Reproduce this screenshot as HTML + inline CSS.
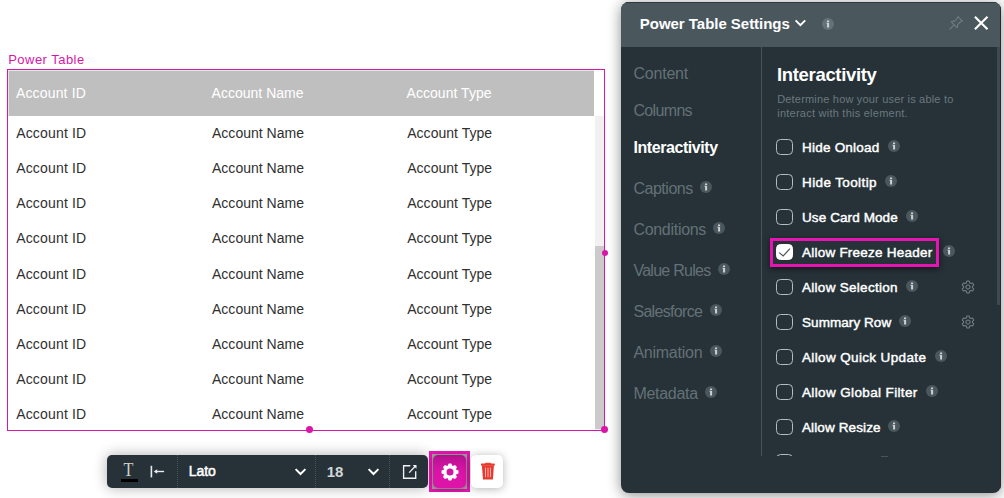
<!DOCTYPE html>
<html><head><meta charset="utf-8"><title>Power Table Settings</title>
<style>
html,body{margin:0;padding:0;}
body{width:1004px;height:498px;background:#fff;position:relative;overflow:hidden;font-family:"Liberation Sans", sans-serif;}
.a{position:absolute;display:block;}
.t{position:absolute;white-space:nowrap;line-height:20px;height:20px;}
.cb{width:17.2px;height:16.4px;box-sizing:border-box;border:1.4px solid #b7bbbd;border-radius:4.5px;}
.cb.on{background:#fff;border-color:#fff;}
</style></head><body>

<div class="t" style="left:8.20px;top:50px;line-height:19px;height:19px;font-size:13px;color:#d916a8;font-weight:400;letter-spacing:0.470px;">Power Table</div>
<div class="a" style="left:7px;top:69px;width:596px;height:360px;border:1px solid #d916a8;"></div>
<div class="a" style="left:8px;top:70px;width:586px;height:46px;background:#dfe9e4;"></div>
<div class="a" style="left:9px;top:71px;width:585px;height:45px;background:#bfbfbf;"></div>
<div class="a" style="left:595px;top:116px;width:9px;height:314px;background:#f1f1f1;"></div>
<div class="a" style="left:595px;top:246px;width:9px;height:183px;background:#cbcbcb;"></div>
<div class="t" style="left:15.90px;top:83px;line-height:20px;height:20px;font-size:14px;color:#fff;font-weight:400;letter-spacing:0.170px;">Account ID</div>
<div class="t" style="left:211.60px;top:83px;line-height:20px;height:20px;font-size:14px;color:#fff;font-weight:400;letter-spacing:0.014px;">Account Name</div>
<div class="t" style="left:406.60px;top:83px;line-height:20px;height:20px;font-size:14px;color:#fff;font-weight:400;letter-spacing:0.035px;">Account Type</div>
<div class="t" style="left:16.20px;top:123px;line-height:20px;height:20px;font-size:14px;color:#303030;font-weight:400;letter-spacing:0.170px;">Account ID</div>
<div class="t" style="left:212.00px;top:123px;line-height:20px;height:20px;font-size:14px;color:#303030;font-weight:400;letter-spacing:0.014px;">Account Name</div>
<div class="t" style="left:407.20px;top:123px;line-height:20px;height:20px;font-size:14px;color:#303030;font-weight:400;letter-spacing:0.035px;">Account Type</div>
<div class="t" style="left:16.20px;top:158px;line-height:20px;height:20px;font-size:14px;color:#303030;font-weight:400;letter-spacing:0.170px;">Account ID</div>
<div class="t" style="left:212.00px;top:158px;line-height:20px;height:20px;font-size:14px;color:#303030;font-weight:400;letter-spacing:0.014px;">Account Name</div>
<div class="t" style="left:407.20px;top:158px;line-height:20px;height:20px;font-size:14px;color:#303030;font-weight:400;letter-spacing:0.035px;">Account Type</div>
<div class="t" style="left:16.20px;top:193px;line-height:20px;height:20px;font-size:14px;color:#303030;font-weight:400;letter-spacing:0.170px;">Account ID</div>
<div class="t" style="left:212.00px;top:193px;line-height:20px;height:20px;font-size:14px;color:#303030;font-weight:400;letter-spacing:0.014px;">Account Name</div>
<div class="t" style="left:407.20px;top:193px;line-height:20px;height:20px;font-size:14px;color:#303030;font-weight:400;letter-spacing:0.035px;">Account Type</div>
<div class="t" style="left:16.20px;top:228px;line-height:20px;height:20px;font-size:14px;color:#303030;font-weight:400;letter-spacing:0.170px;">Account ID</div>
<div class="t" style="left:212.00px;top:228px;line-height:20px;height:20px;font-size:14px;color:#303030;font-weight:400;letter-spacing:0.014px;">Account Name</div>
<div class="t" style="left:407.20px;top:228px;line-height:20px;height:20px;font-size:14px;color:#303030;font-weight:400;letter-spacing:0.035px;">Account Type</div>
<div class="t" style="left:16.20px;top:264px;line-height:20px;height:20px;font-size:14px;color:#303030;font-weight:400;letter-spacing:0.170px;">Account ID</div>
<div class="t" style="left:212.00px;top:264px;line-height:20px;height:20px;font-size:14px;color:#303030;font-weight:400;letter-spacing:0.014px;">Account Name</div>
<div class="t" style="left:407.20px;top:264px;line-height:20px;height:20px;font-size:14px;color:#303030;font-weight:400;letter-spacing:0.035px;">Account Type</div>
<div class="t" style="left:16.20px;top:299px;line-height:20px;height:20px;font-size:14px;color:#303030;font-weight:400;letter-spacing:0.170px;">Account ID</div>
<div class="t" style="left:212.00px;top:299px;line-height:20px;height:20px;font-size:14px;color:#303030;font-weight:400;letter-spacing:0.014px;">Account Name</div>
<div class="t" style="left:407.20px;top:299px;line-height:20px;height:20px;font-size:14px;color:#303030;font-weight:400;letter-spacing:0.035px;">Account Type</div>
<div class="t" style="left:16.20px;top:334px;line-height:20px;height:20px;font-size:14px;color:#303030;font-weight:400;letter-spacing:0.170px;">Account ID</div>
<div class="t" style="left:212.00px;top:334px;line-height:20px;height:20px;font-size:14px;color:#303030;font-weight:400;letter-spacing:0.014px;">Account Name</div>
<div class="t" style="left:407.20px;top:334px;line-height:20px;height:20px;font-size:14px;color:#303030;font-weight:400;letter-spacing:0.035px;">Account Type</div>
<div class="t" style="left:16.20px;top:369px;line-height:20px;height:20px;font-size:14px;color:#303030;font-weight:400;letter-spacing:0.170px;">Account ID</div>
<div class="t" style="left:212.00px;top:369px;line-height:20px;height:20px;font-size:14px;color:#303030;font-weight:400;letter-spacing:0.014px;">Account Name</div>
<div class="t" style="left:407.20px;top:369px;line-height:20px;height:20px;font-size:14px;color:#303030;font-weight:400;letter-spacing:0.035px;">Account Type</div>
<div class="t" style="left:16.20px;top:404px;line-height:20px;height:20px;font-size:14px;color:#303030;font-weight:400;letter-spacing:0.170px;">Account ID</div>
<div class="t" style="left:212.00px;top:404px;line-height:20px;height:20px;font-size:14px;color:#303030;font-weight:400;letter-spacing:0.014px;">Account Name</div>
<div class="t" style="left:407.20px;top:404px;line-height:20px;height:20px;font-size:14px;color:#303030;font-weight:400;letter-spacing:0.035px;">Account Type</div>
<div class="a" style="left:601.80px;top:249.80px;width:6.0px;height:6.0px;border-radius:50%;background:#d916a8;"></div>
<div class="a" style="left:600.90px;top:426.10px;width:6.8px;height:6.8px;border-radius:50%;background:#d916a8;"></div>
<div class="a" style="left:305.90px;top:426.00px;width:7.0px;height:7.0px;border-radius:50%;background:#d916a8;"></div>
<div class="a" style="left:107px;top:455px;width:321px;height:33px;background:#263238;border-radius:5px;box-shadow:0 0 14px rgba(0,0,0,.32);"></div>
<div class="a" style="left:177px;top:455px;width:0;height:33px;border-left:1px dotted #46535a;"></div>
<div class="a" style="left:315px;top:455px;width:0;height:33px;border-left:1px dotted #46535a;"></div>
<div class="a" style="left:389px;top:455px;width:0;height:33px;border-left:1px dotted #46535a;"></div>
<div class="t" style="left:122.85px;top:459.5px;font-family:'Liberation Serif',serif;font-size:18.2px;color:#cdd0d2;line-height:20px;transform:scaleX(.89);transform-origin:50% 50%;">T</div>
<div class="a" style="left:121px;top:479.1px;width:16.8px;height:2.6px;background:#000;"></div>
<svg class="a" style="left:148px;top:463px" width="20" height="17" viewBox="0 0 20 17">
<rect x="2.6" y="2.8" width="1.6" height="11.6" fill="#e8eaeb"/>
<path d="M16.1 8.5H7" stroke="#e8eaeb" stroke-width="1.4" fill="none"/>
<path d="M9.2 6.2 L5.7 8.5 L9.2 10.8Z" fill="#e8eaeb"/></svg>
<div class="t" style="left:188.80px;top:461px;line-height:20px;height:20px;font-size:14px;color:#fff;font-weight:400;letter-spacing:-0.060px;-webkit-text-stroke:0.5px #fff;">Lato</div>
<svg class="a" style="left:293px;top:466px" width="15" height="11" viewBox="0 0 15 11"><path d="M2.6 3.1 L7.5 8 L12.4 3.1" fill="none" stroke="#fff" stroke-width="2"/></svg>
<div class="t" style="left:326.80px;top:461px;line-height:21px;height:21px;font-size:15px;color:#d3d6d8;font-weight:700;letter-spacing:-0.200px;">18</div>
<svg class="a" style="left:365.6px;top:466px" width="15" height="11" viewBox="0 0 15 11"><path d="M2.6 3.1 L7.5 8 L12.4 3.1" fill="none" stroke="#fff" stroke-width="2"/></svg>
<svg class="a" style="left:401px;top:463px" width="18" height="18" viewBox="0 0 18 18">
<path d="M9.3 2.7H2.6V15.2H14.7V8.3" fill="none" stroke="#f1f2f3" stroke-width="1.35"/>
<path d="M8.2 9.6 L14.2 3.3" stroke="#f1f2f3" stroke-width="1.35" fill="none"/>
<path d="M11.6 1.9H15.5V5.8Z" fill="#f1f2f3"/></svg>
<div class="a" style="left:429px;top:451px;width:35px;height:35px;border:3px solid #e614b0;background:#9ba3a0;"></div>
<div class="a" style="left:433px;top:455px;width:33px;height:33px;border-radius:5px;background:linear-gradient(#b1118a 0%,#c5129a 20%,#d514a4 42%,#dc14a8 62%,#dc14a8 100%);box-shadow:0 1px 6px rgba(0,0,0,.3);"></div>
<svg class="a" style="left:439.63px;top:461.83px" width="20" height="20" viewBox="-10 -10 20 20"><path d="M-1.63 -5.88 L-1.02 -7.83 L1.02 -7.83 L1.63 -5.88 L3.01 -5.31 L4.81 -6.26 L6.26 -4.81 L5.31 -3.01 L5.88 -1.63 L7.83 -1.02 L7.83 1.02 L5.88 1.63 L5.31 3.01 L6.26 4.81 L4.81 6.26 L3.01 5.31 L1.63 5.88 L1.02 7.83 L-1.02 7.83 L-1.63 5.88 L-3.01 5.31 L-4.81 6.26 L-6.26 4.81 L-5.31 3.01 L-5.88 1.63 L-7.83 1.02 L-7.83 -1.02 L-5.88 -1.63 L-5.31 -3.01 L-6.26 -4.81 L-4.81 -6.26 L-3.01 -5.31Z" fill="#fff" stroke="#fff" stroke-width="1.3" stroke-linejoin="round"/><circle cx="0" cy="0" r="3.5" fill="#d313a2"/></svg>
<div class="a" style="left:470.8px;top:455px;width:32.4px;height:33px;border-radius:5px;background:#fff;box-shadow:0 1px 8px rgba(0,0,0,.3);"></div>
<svg class="a" style="left:479px;top:461px" width="18" height="21" viewBox="0 0 18 21">
<path d="M6.2 1.8H11.9V2.9H6.2z" fill="#e53a30"/>
<rect x="2" y="2.6" width="13.8" height="2.1" rx="0.6" fill="#e53a30"/>
<path d="M2.9 4.4H14.9L13.9 18.6H4z" fill="#e53a30"/>
<path d="M6.5 6.6V16.2 M9 6.6V16.2 M11.45 6.6V16.2" stroke="#f7c1bc" stroke-width="0.9" fill="none"/></svg>
<div class="a" style="left:621px;top:2px;width:380px;height:490.5px;border-radius:8px;background:#263238;box-shadow:0 2px 14px rgba(0,0,0,.45);overflow:hidden;"><div class="a" style="left:0;top:0;width:380px;height:45px;background:#4a585e;border-top:1px solid #2c383e;box-sizing:border-box;"></div><div class="a" style="left:376px;top:45px;width:3px;height:258px;background:#3d4a51;"></div><div class="a" style="left:379px;top:0;width:1px;height:491px;background:#222c31;"></div><div class="a" style="left:140px;top:45px;width:1px;height:409px;background:#46535a;"></div></div>
<div class="t" style="left:639.80px;top:13px;line-height:21px;height:21px;font-size:15px;color:#fff;font-weight:700;letter-spacing:-0.030px;">Power Table Settings</div>
<svg class="a" style="left:793.2px;top:17px" width="15" height="12" viewBox="0 0 15 12"><path d="M2.6 3.3 L7.4 8.2 L12.2 3.3" fill="none" stroke="#fff" stroke-width="1.9"/></svg>
<svg class="a" style="left:822.00px;top:17.60px" width="12" height="12" viewBox="0 0 12 12"><circle cx="6" cy="6" r="6" fill="#637277"/><rect x="5" y="2.5" width="2.1" height="1.5" fill="#d2d6d8"/><path d="M4.3 4.8H7.1V9.6H5.1V5.6H4.3z" fill="#d2d6d8"/></svg>
<svg class="a" style="left:946px;top:12px" width="22" height="22" viewBox="0 0 22 22">
<g fill="none" stroke="#6f7c81" stroke-width="1.1" stroke-linejoin="round" stroke-linecap="round">
<path d="M11.9 4.6 L16.6 9.1"/>
<path d="M12.5 5.2 L8.3 9.3 Q6.5 8.7 5.3 9.9 L10.9 15.7 Q12.1 14.4 11.5 12.7 L15.9 8.5"/>
<path d="M8.1 12.9 L3.9 17.2"/></g></svg>
<svg class="a" style="left:973px;top:15px" width="17" height="17" viewBox="0 0 17 17"><path d="M1.9 1.7 L14.5 14.3 M14.5 1.7 L1.9 14.3" stroke="#fff" stroke-width="2.1" fill="none"/></svg>
<div class="t" style="left:633.40px;top:63px;line-height:21px;height:21px;font-size:16px;color:#647176;font-weight:400;letter-spacing:-0.200px;">Content</div>
<div class="t" style="left:633.40px;top:100px;line-height:21px;height:21px;font-size:16px;color:#647176;font-weight:400;letter-spacing:-0.650px;">Columns</div>
<div class="t" style="left:633.40px;top:137px;line-height:21px;height:21px;font-size:16px;color:#fff;font-weight:700;letter-spacing:-0.424px;">Interactivity</div>
<div class="t" style="left:633.40px;top:178px;line-height:21px;height:21px;font-size:16px;color:#647176;font-weight:400;letter-spacing:-0.468px;">Captions</div>
<svg class="a" style="left:700.00px;top:181.20px" width="12" height="12" viewBox="0 0 12 12"><circle cx="6" cy="6" r="6" fill="#4a575d"/><rect x="5" y="2.5" width="2.1" height="1.5" fill="#cdd1d3"/><path d="M4.3 4.8H7.1V9.6H5.1V5.6H4.3z" fill="#cdd1d3"/></svg>
<div class="t" style="left:633.40px;top:219px;line-height:21px;height:21px;font-size:16px;color:#647176;font-weight:400;letter-spacing:-0.293px;">Conditions</div>
<svg class="a" style="left:713.20px;top:222.20px" width="12" height="12" viewBox="0 0 12 12"><circle cx="6" cy="6" r="6" fill="#4a575d"/><rect x="5" y="2.5" width="2.1" height="1.5" fill="#cdd1d3"/><path d="M4.3 4.8H7.1V9.6H5.1V5.6H4.3z" fill="#cdd1d3"/></svg>
<div class="t" style="left:633.40px;top:260px;line-height:21px;height:21px;font-size:16px;color:#647176;font-weight:400;letter-spacing:-0.729px;">Value Rules</div>
<svg class="a" style="left:718.00px;top:263.20px" width="12" height="12" viewBox="0 0 12 12"><circle cx="6" cy="6" r="6" fill="#4a575d"/><rect x="5" y="2.5" width="2.1" height="1.5" fill="#cdd1d3"/><path d="M4.3 4.8H7.1V9.6H5.1V5.6H4.3z" fill="#cdd1d3"/></svg>
<div class="t" style="left:633.40px;top:301px;line-height:21px;height:21px;font-size:16px;color:#647176;font-weight:400;letter-spacing:-0.673px;">Salesforce</div>
<svg class="a" style="left:710.10px;top:304.20px" width="12" height="12" viewBox="0 0 12 12"><circle cx="6" cy="6" r="6" fill="#4a575d"/><rect x="5" y="2.5" width="2.1" height="1.5" fill="#cdd1d3"/><path d="M4.3 4.8H7.1V9.6H5.1V5.6H4.3z" fill="#cdd1d3"/></svg>
<div class="t" style="left:633.40px;top:342px;line-height:21px;height:21px;font-size:16px;color:#647176;font-weight:400;letter-spacing:-0.250px;">Animation</div>
<svg class="a" style="left:710.10px;top:345.20px" width="12" height="12" viewBox="0 0 12 12"><circle cx="6" cy="6" r="6" fill="#4a575d"/><rect x="5" y="2.5" width="2.1" height="1.5" fill="#cdd1d3"/><path d="M4.3 4.8H7.1V9.6H5.1V5.6H4.3z" fill="#cdd1d3"/></svg>
<div class="t" style="left:633.40px;top:383px;line-height:21px;height:21px;font-size:16px;color:#647176;font-weight:400;letter-spacing:-0.296px;">Metadata</div>
<svg class="a" style="left:705.10px;top:386.20px" width="12" height="12" viewBox="0 0 12 12"><circle cx="6" cy="6" r="6" fill="#4a575d"/><rect x="5" y="2.5" width="2.1" height="1.5" fill="#cdd1d3"/><path d="M4.3 4.8H7.1V9.6H5.1V5.6H4.3z" fill="#cdd1d3"/></svg>
<div class="t" style="left:777.00px;top:62px;line-height:25px;height:25px;font-size:18.5px;color:#fff;font-weight:700;letter-spacing:-0.330px;">Interactivity</div>
<div class="t" style="left:777.20px;top:91px;line-height:16px;height:16px;font-size:11px;color:#6b787e;font-weight:400;letter-spacing:0.185px;">Determine how your user is able to</div>
<div class="t" style="left:777.20px;top:105px;line-height:16px;height:16px;font-size:11px;color:#6b787e;font-weight:400;letter-spacing:0.244px;">interact with this element.</div>
<div class="a cb" style="left:776px;top:138.70px"></div>
<div class="t" style="left:802.00px;top:138px;line-height:19px;height:19px;font-size:13.5px;color:#fff;font-weight:400;letter-spacing:0.225px;-webkit-text-stroke:0.45px #fff;">Hide Onload</div>
<svg class="a" style="left:888.10px;top:139.70px" width="12" height="12" viewBox="0 0 12 12"><circle cx="6" cy="6" r="6" fill="#4a575d"/><rect x="5" y="2.5" width="2.1" height="1.5" fill="#cdd1d3"/><path d="M4.3 4.8H7.1V9.6H5.1V5.6H4.3z" fill="#cdd1d3"/></svg>
<div class="a cb" style="left:776px;top:173.70px"></div>
<div class="t" style="left:802.00px;top:173px;line-height:19px;height:19px;font-size:13.5px;color:#fff;font-weight:400;letter-spacing:0.384px;-webkit-text-stroke:0.45px #fff;">Hide Tooltip</div>
<svg class="a" style="left:885.40px;top:174.70px" width="12" height="12" viewBox="0 0 12 12"><circle cx="6" cy="6" r="6" fill="#4a575d"/><rect x="5" y="2.5" width="2.1" height="1.5" fill="#cdd1d3"/><path d="M4.3 4.8H7.1V9.6H5.1V5.6H4.3z" fill="#cdd1d3"/></svg>
<div class="a cb" style="left:776px;top:208.70px"></div>
<div class="t" style="left:802.00px;top:208px;line-height:19px;height:19px;font-size:13.5px;color:#fff;font-weight:400;letter-spacing:0.100px;-webkit-text-stroke:0.45px #fff;">Use Card Mode</div>
<svg class="a" style="left:906.20px;top:209.70px" width="12" height="12" viewBox="0 0 12 12"><circle cx="6" cy="6" r="6" fill="#4a575d"/><rect x="5" y="2.5" width="2.1" height="1.5" fill="#cdd1d3"/><path d="M4.3 4.8H7.1V9.6H5.1V5.6H4.3z" fill="#cdd1d3"/></svg>
<div class="a" style="left:770px;top:238px;width:163px;height:23px;border:3px solid #e614b0;box-shadow:0 2px 6px rgba(0,0,0,.55);"></div>
<div class="a cb on" style="left:776px;top:243.70px"></div><svg class="a" style="left:776px;top:243.70px" width="17" height="17" viewBox="0 0 17 17"><path d="M3.2 8.6 L7.2 12 L13.9 4.6" fill="none" stroke="#4f585e" stroke-width="1.2"/></svg>
<div class="t" style="left:802.00px;top:243px;line-height:19px;height:19px;font-size:13.5px;color:#fff;font-weight:400;letter-spacing:0.230px;-webkit-text-stroke:0.45px #fff;">Allow Freeze Header</div>
<svg class="a" style="left:943.00px;top:244.70px" width="12" height="12" viewBox="0 0 12 12"><circle cx="6" cy="6" r="6" fill="#4a575d"/><rect x="5" y="2.5" width="2.1" height="1.5" fill="#cdd1d3"/><path d="M4.3 4.8H7.1V9.6H5.1V5.6H4.3z" fill="#cdd1d3"/></svg>
<div class="a cb" style="left:776px;top:278.70px"></div>
<div class="t" style="left:802.00px;top:278px;line-height:19px;height:19px;font-size:13.5px;color:#fff;font-weight:400;letter-spacing:0.286px;-webkit-text-stroke:0.45px #fff;">Allow Selection</div>
<svg class="a" style="left:906.20px;top:279.70px" width="12" height="12" viewBox="0 0 12 12"><circle cx="6" cy="6" r="6" fill="#4a575d"/><rect x="5" y="2.5" width="2.1" height="1.5" fill="#cdd1d3"/><path d="M4.3 4.8H7.1V9.6H5.1V5.6H4.3z" fill="#cdd1d3"/></svg>
<svg class="a" style="left:960.00px;top:279.40px" width="16" height="16" viewBox="-8 -8 16 16"><path d="M-1.59 -4.21 L-1.21 -5.98 L1.21 -5.98 L1.59 -4.21 L2.85 -3.48 L4.57 -4.04 L5.78 -1.94 L4.44 -0.73 L4.44 0.73 L5.78 1.94 L4.57 4.04 L2.85 3.48 L1.59 4.21 L1.21 5.98 L-1.21 5.98 L-1.59 4.21 L-2.85 3.48 L-4.57 4.04 L-5.78 1.94 L-4.44 0.73 L-4.44 -0.73 L-5.78 -1.94 L-4.57 -4.04 L-2.85 -3.48Z" fill="none" stroke="#737e83" stroke-width="1.05" stroke-linejoin="round"/><circle cx="0" cy="0" r="2.1" fill="none" stroke="#737e83" stroke-width="1.05"/></svg>
<div class="a cb" style="left:776px;top:313.70px"></div>
<div class="t" style="left:802.00px;top:313px;line-height:19px;height:19px;font-size:13.5px;color:#fff;font-weight:400;letter-spacing:0.062px;-webkit-text-stroke:0.45px #fff;">Summary Row</div>
<svg class="a" style="left:899.40px;top:314.70px" width="12" height="12" viewBox="0 0 12 12"><circle cx="6" cy="6" r="6" fill="#4a575d"/><rect x="5" y="2.5" width="2.1" height="1.5" fill="#cdd1d3"/><path d="M4.3 4.8H7.1V9.6H5.1V5.6H4.3z" fill="#cdd1d3"/></svg>
<svg class="a" style="left:960.00px;top:314.40px" width="16" height="16" viewBox="-8 -8 16 16"><path d="M-1.59 -4.21 L-1.21 -5.98 L1.21 -5.98 L1.59 -4.21 L2.85 -3.48 L4.57 -4.04 L5.78 -1.94 L4.44 -0.73 L4.44 0.73 L5.78 1.94 L4.57 4.04 L2.85 3.48 L1.59 4.21 L1.21 5.98 L-1.21 5.98 L-1.59 4.21 L-2.85 3.48 L-4.57 4.04 L-5.78 1.94 L-4.44 0.73 L-4.44 -0.73 L-5.78 -1.94 L-4.57 -4.04 L-2.85 -3.48Z" fill="none" stroke="#737e83" stroke-width="1.05" stroke-linejoin="round"/><circle cx="0" cy="0" r="2.1" fill="none" stroke="#737e83" stroke-width="1.05"/></svg>
<div class="a cb" style="left:776px;top:348.70px"></div>
<div class="t" style="left:802.00px;top:348px;line-height:19px;height:19px;font-size:13.5px;color:#fff;font-weight:400;letter-spacing:0.359px;-webkit-text-stroke:0.45px #fff;">Allow Quick Update</div>
<svg class="a" style="left:935.10px;top:349.70px" width="12" height="12" viewBox="0 0 12 12"><circle cx="6" cy="6" r="6" fill="#4a575d"/><rect x="5" y="2.5" width="2.1" height="1.5" fill="#cdd1d3"/><path d="M4.3 4.8H7.1V9.6H5.1V5.6H4.3z" fill="#cdd1d3"/></svg>
<div class="a cb" style="left:776px;top:383.70px"></div>
<div class="t" style="left:802.00px;top:383px;line-height:19px;height:19px;font-size:13.5px;color:#fff;font-weight:400;letter-spacing:0.365px;-webkit-text-stroke:0.45px #fff;">Allow Global Filter</div>
<svg class="a" style="left:925.90px;top:384.70px" width="12" height="12" viewBox="0 0 12 12"><circle cx="6" cy="6" r="6" fill="#4a575d"/><rect x="5" y="2.5" width="2.1" height="1.5" fill="#cdd1d3"/><path d="M4.3 4.8H7.1V9.6H5.1V5.6H4.3z" fill="#cdd1d3"/></svg>
<div class="a cb" style="left:776px;top:418.70px"></div>
<div class="t" style="left:802.00px;top:418px;line-height:19px;height:19px;font-size:13.5px;color:#fff;font-weight:400;letter-spacing:0.113px;-webkit-text-stroke:0.45px #fff;">Allow Resize</div>
<svg class="a" style="left:888.20px;top:419.70px" width="12" height="12" viewBox="0 0 12 12"><circle cx="6" cy="6" r="6" fill="#4a575d"/><rect x="5" y="2.5" width="2.1" height="1.5" fill="#cdd1d3"/><path d="M4.3 4.8H7.1V9.6H5.1V5.6H4.3z" fill="#cdd1d3"/></svg>
<div class="a" style="left:776px;top:453.7px;width:18px;height:2.7px;overflow:hidden;"><div class="cb"></div></div>
<div class="a" style="left:881px;top:455.6px;width:7px;height:1px;background:#48545a;"></div>
</body></html>
